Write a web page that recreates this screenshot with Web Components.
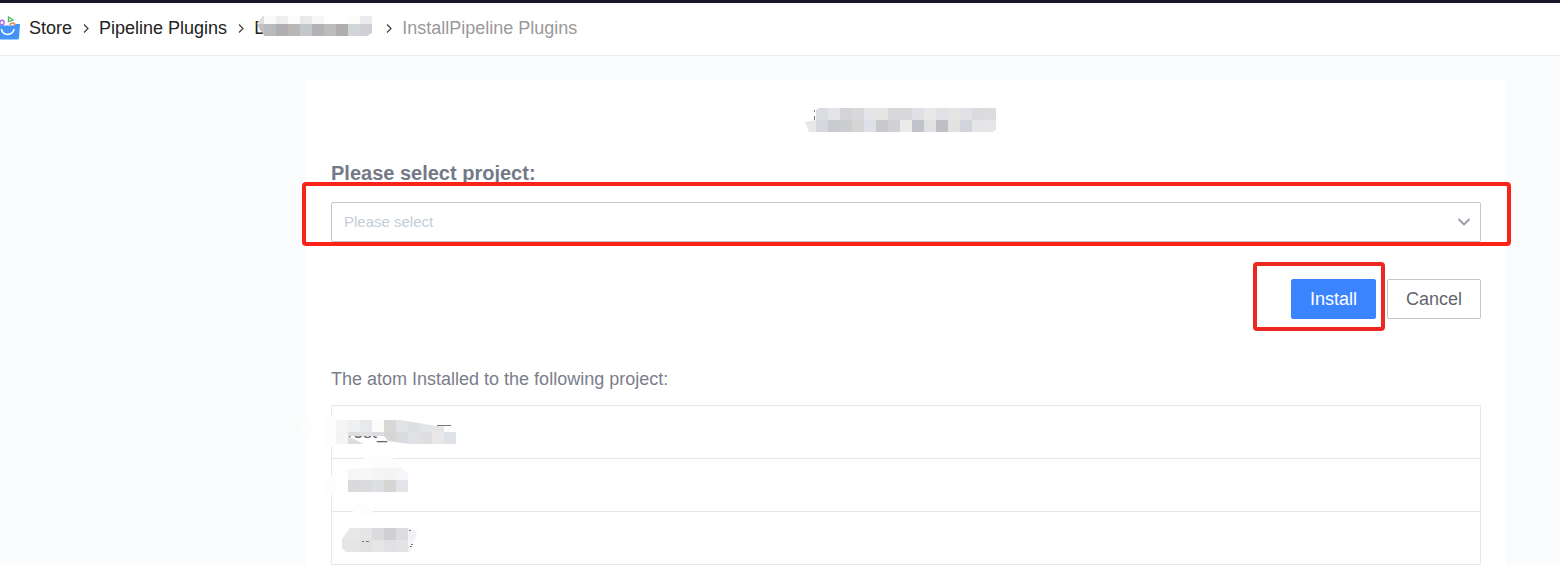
<!DOCTYPE html>
<html lang="en">
<head>
<meta charset="utf-8">
<title>Install Pipeline Plugins</title>
<style>
html,body{margin:0;height:100%}
body{font-family:"Liberation Sans",Arial,sans-serif;font-size:18px;background:#fafbfd;color:#222;overflow:hidden}
</style>
</head>
<body>
<install-page></install-page>
<script>
const define=(name,html,setup)=>{
  const t=document.createElement('template');t.innerHTML=html;
  customElements.define(name,class extends HTMLElement{
    constructor(){super();this.attachShadow({mode:'open'}).append(t.content.cloneNode(true));}
    connectedCallback(){if(setup)setup.call(this,this.shadowRoot);}
  });
};

/* Redacted value: 12px cells, one comma list of colours per row, clipped to an outline. */
define('redacted-value',`<style>:host{display:block}svg{display:block;overflow:visible}</style><svg aria-hidden="true" shape-rendering="crispEdges"></svg>`,function(root){
  const rows=this.getAttribute('cells').split('/').map(r=>r.split(','));
  const top=+(this.getAttribute('top')||12),x0=+(this.getAttribute('start')||0);
  const w=x0+rows[0].length*12,h=top+12,svg=root.querySelector('svg');
  svg.setAttribute('width',w);svg.setAttribute('height',h);
  let s='';
  rows.forEach((r,j)=>r.forEach((c,i)=>{
    const x=i?x0+i*12:0;
    s+='<rect x="'+x+'" y="'+(j?top:0)+'" width="'+(i?12:x0+12)+'" height="'+(j?12:top)+'" fill="#'+c+'"/>';
  }));
  const smudge=this.getAttribute('smudge'),marks=this.getAttribute('marks');
  svg.innerHTML='<defs><clipPath id="c"><polygon points="'+this.getAttribute('outline')+'"/></clipPath></defs>'
    +(smudge?'<path fill="#fdfdfd" d="'+smudge+'"/>':'')
    +'<g clip-path="url(#c)">'+s+'</g>'
    +(marks?'<path fill="none" stroke="#777" d="'+marks+'"/>':'');
});

define('store-logo',`<style>:host{display:block;width:20px;height:26px;overflow:hidden}svg{display:block}</style>
<svg width="20" height="26" viewBox="0 0 20 26" aria-hidden="true">
<path d="M8.500 2l4.500 3-4.500 1.500z" fill="none" stroke="#4fb768" stroke-width="1.300"/>
<path d="M0 9.500h3l1 2h9l1-2h2l.5 2H0z" fill="#83b7f5"/>
<circle cx="2" cy="7.500" r="2.200" fill="none" stroke="#a56be8" stroke-width="1.400"/>
<path d="M0 10.500h14l2-1.500h4l-1 14q-.2 1.500-1.500 1.500H0z" fill="#4294f7"/>
<path d="M10 10.500a2.500 2.500 0 0 1 5 0" fill="none" stroke="#e48a5c" stroke-width="1.500"/>
<path d="M1.500 14.500c1.500 6.500 10.500 6.500 12.500 0" fill="none" stroke="#fff" stroke-width="1.500" stroke-linecap="round"/>
</svg>`);

define('crumb-arrow',`<style>:host{display:flex;width:27px;justify-content:center}svg{display:block}</style>
<svg width="8" height="10" viewBox="0 0 8 10" aria-hidden="true"><path d="M2 1.500l4 4-4 4" fill="none" stroke="#444" stroke-width="1.300"/></svg>`);

define('page-header',`<style>
:host{display:block;background:#fff;border-top:3px solid #1a1726;border-bottom:1px solid #e9ebf0}
nav{display:flex;align-items:center;height:50px;padding-bottom:2px;line-height:24px;white-space:nowrap}
a{color:#222;text-decoration:none}
.name{position:relative;width:121px;height:24px}
redacted-value{position:absolute;left:3px;top:0}
.home{margin-left:9px}
[aria-current]{color:#999}
</style>
<nav aria-label="Breadcrumb"><store-logo></store-logo><a class="home" href="#store">Store</a><crumb-arrow></crumb-arrow><a href="#plugins">Pipeline Plugins</a><crumb-arrow></crumb-arrow><a class="name" href="#detail">D<redacted-value top="8" start="-5" cells="e2dddd,fafafa,eeeeee,fcfcfc,e9e9e7,f5f6f6,fefefe,fefefe,fbfbf8,ececee/c6c1c1,b7bbbd,b0aeb0,b9b8b9,c2c7cb,b3b3b6,bdbbbc,b1adae,d0d5d7,d0ced5" outline="0,7 6,0 115,0 115,17 110,20 7,20 6,17 3,14"></redacted-value></a><crumb-arrow></crumb-arrow><span aria-current="page">InstallPipeline Plugins</span></nav>`);

define('project-select',`<style>
:host{display:block;position:relative}
label{display:block;font-size:20px;font-weight:bold;line-height:24px;color:#737987;margin-bottom:17px}
.box{display:grid;align-items:center}
select{grid-area:1/1;appearance:none;box-sizing:border-box;width:100%;height:40px;padding:0 12px 2px;border:1px solid #c4c6cc;border-radius:2px;background:#fff;color:#c3cdd7;font:15px "Liberation Sans",Arial,sans-serif}
svg{grid-area:1/1;justify-self:end;margin-right:10px;pointer-events:none}
.mark{position:absolute;inset:auto -30px -4px -29px;height:56px;border:4px solid #f9231a;border-radius:4px;pointer-events:none}
</style>
<label for="project">Please select project:</label>
<div class="box"><select id="project"><option>Please select</option></select><svg width="14" height="10" viewBox="0 0 14 10" aria-hidden="true"><path d="M1.500 2l5.500 5.500L12.500 2" fill="none" stroke="#979ba5" stroke-width="1.800"/></svg></div>
<div class="mark"></div>`);

define('form-actions',`<style>
:host{display:flex;justify-content:flex-end;gap:11px}
.primary{position:relative}
button{display:block;box-sizing:border-box;height:40px;padding:0 18px;border:1px solid #c4c6cc;border-radius:2px;background:#fff;color:#63656e;font:18px "Liberation Sans",Arial,sans-serif}
.primary button{background:#3a84ff;border-color:#3a84ff;color:#fff}
.mark{position:absolute;inset:-17px -9px -12px -38px;border:4px solid #ee281f;border-radius:4px;pointer-events:none}
</style>
<div class="primary"><button type="button">Install</button><div class="mark"></div></div><button type="button">Cancel</button>`);

define('project-table',`<style>
:host{display:block}
table{width:100%;border-collapse:collapse;table-layout:fixed}
caption{text-align:left;line-height:24px;padding-bottom:14px;color:#7b7d8a;white-space:nowrap}
td{position:relative;height:52px;padding:0 12px;border:1px solid #e6e7ea;line-height:24px;color:#63656e}
redacted-value{position:absolute}
.a{left:4px;top:14px}.b{left:16px;top:9px}.c{left:10px;top:16px}
</style>
<table><caption>The atom Installed to the following project:</caption><tbody>
<tr><td>Test_<redacted-value class="a" cells="f5f5f5,eff1f1,e8e9ec,fcfdfa,d7d7d8,e1e3e8,dedfe1,e3e4e8,e5e5e5,fefefe/f4f4f4,dddddd,e1e2e5,dddddd,d6d6d7,dadbde,dfe1e6,dfdfe1,e9e7e7,dfe1e8" outline="0,0 65,0 100,6 120,7 120,24 73,24 52,21 48,16 12,16 28,24 0,24" smudge="M-12 -3H0V26H-12zM-35 -1h10v16h-10z" marks="M101 5.500H115"></redacted-value></td></tr>
<tr><td><redacted-value class="b" cells="f6f6f6,f7f7f9,f4f5f5,f4f4f4,f5f6f9/dadada,dadbde,dedfe3,d5d5d6,e3e4e9" outline="0,1 30,0 54,0 60,5 60,24 0,24" smudge="M12 -12H42L54 0H30zM-24 9L-12 7V27L-24 26zM-6 36H20L28 47H10z"></redacted-value></td></tr>
<tr><td><redacted-value class="c" start="6" cells="e7e8ea,e5e5e5,dadbdf,d0d0d3,dedbde,f0f2f6/e5e5e5,e1e1e1,e5e7e7,e0e1e5,e3e3e3,f1f3f7" outline="8,0 66,0 75,3 73,12 69,17 69,24 4,24 0,20 0,11" marks="M20 13.500h2M24 13.500h3M68 18.500h2M69 16.500h2M67 2.500h2"></redacted-value></td></tr>
</tbody></table>`);

define('install-card',`<style>
:host{display:block;background:#fff;padding:28px 25px 0}
h1{display:flex;justify-content:center;margin:0 12px 29px 0;height:24px}
form-actions{margin:37px 0 48px}
</style>
<h1 aria-label="Plugin name"><redacted-value start="-1" cells="fefefe,dbdce0,e2e4e9,d4d4d6,d8d8da,e4e5e8,e5e5e4,d7d8dc,d8d8da,dee0e6,e8e8e8,dfe1e6,e4e4e3,e0e2e7,dbdadd,dedbdf/eae8e7,d7d8dd,cacbd0,cccdd1,d7d4d5,dde0e7,c9c9cb,d0d1d6,ebebec,c0c3c9,e1e1e1,bfc0c7,e4e2e0,d1d4db,e5e5e8,e6e6e9" outline="0,14 11,12 11,2 14,0 191,0 191,22 187,24 4,24" marks="M9.500 2v2M9.500 8v4"></redacted-value></h1>
<project-select></project-select><form-actions></form-actions><project-table></project-table>`);

define('install-page',`<style>
:host{display:flex;flex-direction:column;min-height:100%}
main{padding:24px 54px 0 306px}
</style>
<page-header></page-header><main><install-card></install-card></main>`);
</script>
</body>
</html>
